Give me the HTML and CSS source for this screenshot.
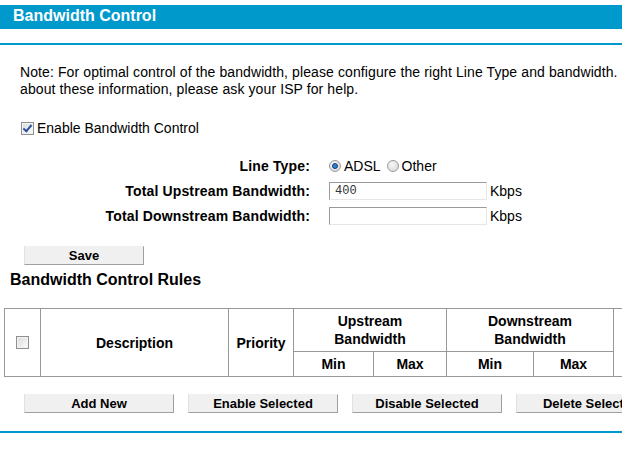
FILE: index.html
```html
<!DOCTYPE html>
<html lang="en">
<head>
  <meta charset="UTF-8" />
  <title>Bandwidth Control</title>
  <link rel="stylesheet" href="styles.css">
</head>
<body>
  <div class="title">Bandwidth Control</div>
  <div class="rule"></div>

  <p class="note">Note: For optimal control of the bandwidth, please configure the right Line Type and bandwidth.<br>about these information, please ask your ISP for help.</p>

  <label class="enable"><input type="checkbox" class="check" checked>Enable Bandwidth Control</label>

  <div class="form">
    <span class="lbl">Line Type:</span>
    <div class="ctl">
      <label class="opt"><input type="radio" name="line" class="radio" checked>ADSL</label>
      <label class="opt"><input type="radio" name="line" class="radio">Other</label>
    </div>
    <span class="lbl">Total Upstream Bandwidth:</span>
    <div class="ctl"><input type="text" class="field" value="400"><span class="unit">Kbps</span></div>
    <span class="lbl">Total Downstream Bandwidth:</span>
    <div class="ctl"><input type="text" class="field" value=""><span class="unit">Kbps</span></div>
  </div>

  <button class="btn save">Save</button>

  <h2 class="rules-title">Bandwidth Control Rules</h2>

  <table class="rules">
    <colgroup>
      <col style="width:36px"><col style="width:188px"><col style="width:65px">
      <col style="width:80px"><col style="width:73px"><col style="width:87px"><col style="width:80px">
      <col style="width:100px">
    </colgroup>
    <thead>
      <tr class="r1">
        <th rowspan="2"><input type="checkbox" class="check"></th>
        <th rowspan="2">Description</th>
        <th rowspan="2">Priority</th>
        <th colspan="2">Upstream<br>Bandwidth</th>
        <th colspan="2">Downstream<br>Bandwidth</th>
        <th rowspan="2"></th>
      </tr>
      <tr class="r2">
        <th>Min</th><th>Max</th><th>Min</th><th>Max</th>
      </tr>
    </thead>
  </table>

  <div class="actions">
    <button class="btn wide">Add New</button>
    <button class="btn wide">Enable Selected</button>
    <button class="btn wide">Disable Selected</button>
    <button class="btn wide">Delete Selected</button>
  </div>

  <div class="rule bottom"></div>
</body>
</html>
```

FILE: styles.css
```css
html, body {
  overflow: hidden;
}
body {
  margin: 0;
  padding-top: 5px;
  font-family: 'Liberation Sans', Arial, sans-serif;
  font-size: 14px;
  color: #000;
  background: #fff;
}
.title {
  height: 24px;
  line-height: 21px;
  padding-left: 13px;
  background: #0099cc;
  color: #fff;
  font-size: 16px;
  font-weight: bold;
}
.rule {
  height: 2px;
  margin-top: 14px;
  background: #0099cc;
}
.rule.bottom {
  margin-top: 18px;
}
.note {
  margin: 19px 0 0;
  padding-left: 20px;
  line-height: 17px;
  letter-spacing: 0.1px;
  white-space: nowrap;
}
.enable {
  display: flex;
  align-items: center;
  height: 16px;
  margin: 22px 0 0 21px;
}
.enable .check {
  margin: 0 3px 0 0;
}
.check {
  appearance: none;
  position: relative;
  width: 13px;
  height: 13px;
  margin: 0;
  border: 1px solid #8f8f8f;
  background: linear-gradient(135deg, #dadada, #f6f6f6 80%);
  box-shadow: inset 0 0 0 1px #f4f4f4;
}
.check:checked::after {
  content: '';
  position: absolute;
  left: 3px;
  top: 0px;
  width: 3px;
  height: 7px;
  border: solid #2d50a0;
  border-width: 0 2px 2px 0;
  transform: rotate(40deg);
}
.form {
  display: grid;
  grid-template-columns: 310px auto;
  grid-auto-rows: 18px;
  column-gap: 19px;
  row-gap: 7px;
  margin-top: 21px;
}
.lbl {
  text-align: right;
  font-weight: bold;
  line-height: 18px;
  letter-spacing: 0.15px;
}
.ctl {
  display: flex;
  align-items: center;
  line-height: 18px;
}
.opt {
  display: flex;
  align-items: center;
  margin-right: 6px;
}
.radio {
  appearance: none;
  position: relative;
  width: 12px;
  height: 12px;
  margin: 0 3px 0 0;
  border: 1px solid #9a9a9a;
  border-radius: 50%;
  background: radial-gradient(circle at 40% 35%, #f8f8f8, #d4d4d4);
}
.radio:checked::after {
  content: '';
  position: absolute;
  left: 2px;
  top: 2px;
  width: 4px;
  height: 4px;
  border: 1px solid #1d3e70;
  border-radius: 50%;
  background: #2f7fd0;
}
.field {
  box-sizing: border-box;
  width: 158px;
  height: 18px;
  margin: 0;
  padding: 0 5px;
  border: 1px solid;
  border-color: #9a9a9a #e6e6e6 #e6e6e6 #9a9a9a;
  font-family: 'Liberation Mono', 'Courier New', monospace;
  font-size: 12px;
  color: #333;
}
.unit {
  margin-left: 3px;
}
.btn {
  box-sizing: border-box;
  height: 19px;
  padding: 0;
  background: #f0f0f0;
  border: 1px solid;
  border-color: #f0f0f0 #a0a0a0 #a0a0a0 #e0e0e0;
  font-family: 'Liberation Sans', Arial, sans-serif;
  font-size: 13px;
  font-weight: bold;
  color: #000;
  cursor: pointer;
}
.save {
  display: block;
  width: 120px;
  margin: 21px 0 0 24px;
}
.rules-title {
  margin: 5px 0 0 10px;
  font-size: 16px;
  line-height: 20px;
}
.rules {
  table-layout: fixed;
  width: 709px;
  margin: 18px 0 0 4px;
  border-collapse: collapse;
}
.rules th {
  padding: 0;
  border: 1px solid #999;
  font-size: 14px;
  line-height: 18px;
  text-align: center;
}
.rules .r1 {
  height: 43px;
}
.rules .r2 {
  height: 25px;
}
.rules .check {
  display: block;
  margin: 0 auto;
}
.actions {
  display: flex;
  gap: 14px;
  margin-top: 17px;
  padding-left: 24px;
}
.wide {
  flex-shrink: 0;
  width: 150px;
}
```
